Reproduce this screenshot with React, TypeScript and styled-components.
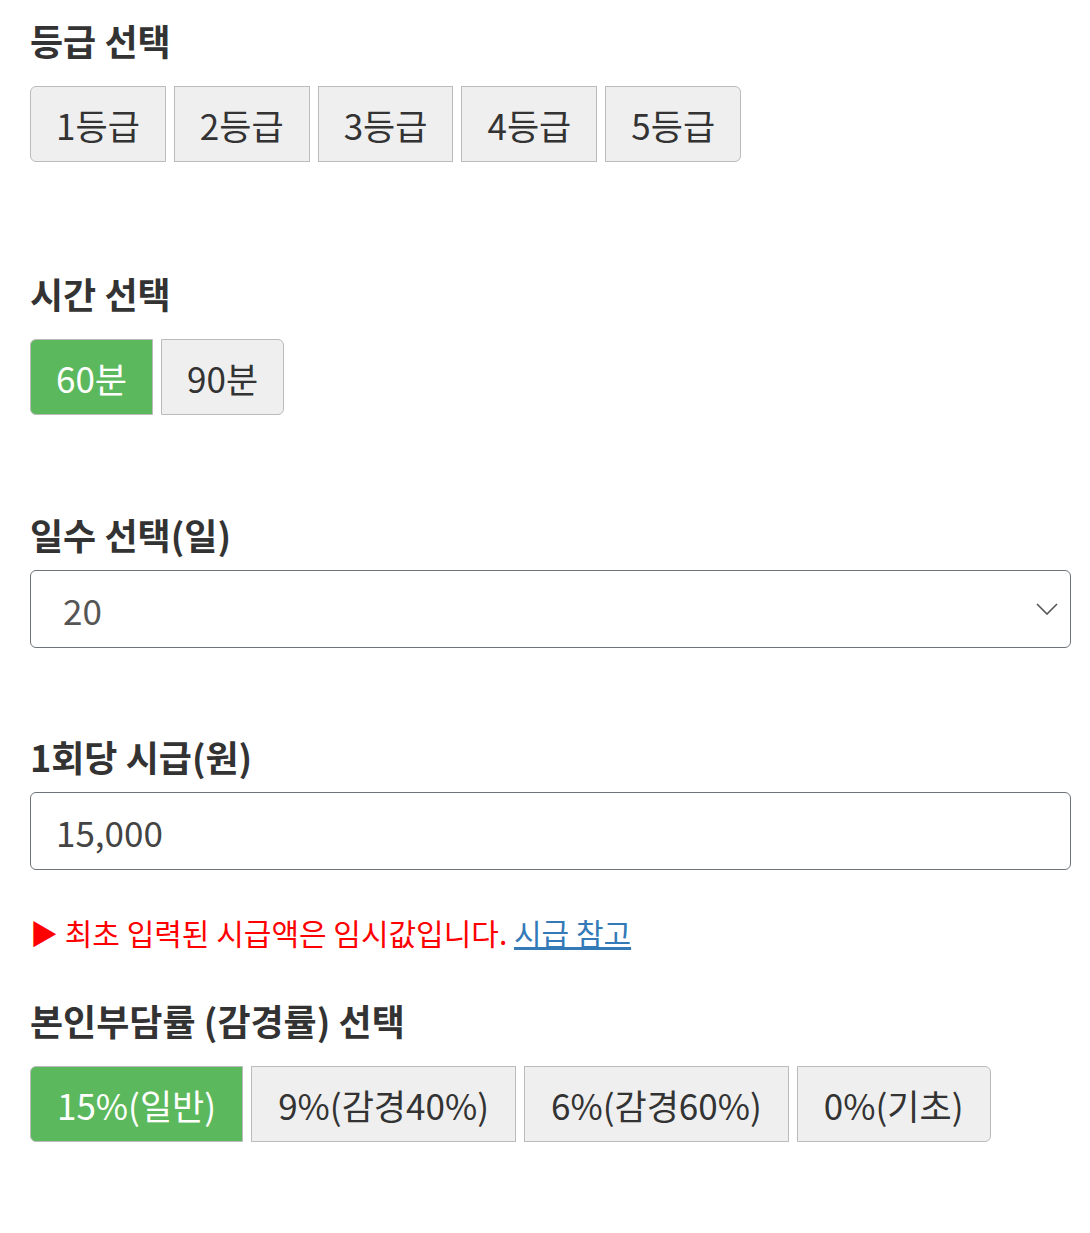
import React, { useState } from 'react'
import styled, { createGlobalStyle } from 'styled-components'

const GlobalStyle = createGlobalStyle`
    html, body {
        margin: 0;
        padding: 0;
        background: #fff;
    }

    body {
        font-family: "Noto Sans CJK KR", "Noto Sans", sans-serif;
        color: #333;
    }
`

const grades = ['1등급', '2등급', '3등급', '4등급', '5등급']
const times = ['60분', '90분']
const rates = ['15%(일반)', '9%(감경40%)', '6%(감경60%)', '0%(기초)']

type ChoiceProps = {
    options: string[]
    selected?: string
    pad?: number
    onSelect: (value: string) => void
}

const ChoiceGroup: React.FC<ChoiceProps> = ({ options, selected, pad, onSelect }) => (
    <Buttons>
        {options.map(option => (
            <Choice key={option} $active={option === selected} $pad={pad} onClick={() => onSelect(option)}>
                {option}
            </Choice>
        ))}
    </Buttons>
)

const App: React.FC = () => {
    const [grade, setGrade] = useState<string | undefined>()
    const [time, setTime] = useState('60분')
    const [days, setDays] = useState('20')
    const [wage, setWage] = useState('15,000')
    const [rate, setRate] = useState('15%(일반)')

    return (
        <>
            <GlobalStyle />
            <Page>
                <Section>
                    <Heading>등급 선택</Heading>
                    <ChoiceGroup options={grades} selected={grade} onSelect={setGrade} />
                </Section>

                <Section $top={109}>
                    <Heading>시간 선택</Heading>
                    <ChoiceGroup options={times} selected={time} onSelect={setTime} />
                </Section>

                <Section $top={97} $gap={10}>
                    <Heading>일수 선택(일)</Heading>
                    <SelectWrap>
                        <Select value={days} onChange={e => setDays(e.target.value)}>
                            {Array.from({ length: 31 }, (_, i) => i + 1).map(n => (
                                <option key={n} value={String(n)}>{n}</option>
                            ))}
                        </Select>
                        <Chevron width="22" height="12" viewBox="0 0 22 12">
                            <path d="M1 1 L11 11 L21 1" fill="none" stroke="#555" strokeWidth="1.6" />
                        </Chevron>
                    </SelectWrap>
                </Section>

                <Section $top={86} $gap={10}>
                    <Heading>1회당 시급(원)</Heading>
                    <Input value={wage} onChange={e => setWage(e.target.value)} />
                    <Notice>
                        <Arrow>▶</Arrow> 최초 입력된 시급액은 임시값입니다. <a href="#">시급 참고</a>
                    </Notice>
                </Section>

                <Section $top={45}>
                    <Heading>본인부담률 (감경률) 선택</Heading>
                    <ChoiceGroup options={rates} selected={rate} pad={26} onSelect={setRate} />
                </Section>
            </Page>
        </>
    )
}

const Page = styled.div`
    padding: 18px 19px 90px 30px;
    width: 1041px;
`

const Section = styled.section<{ $top?: number; $gap?: number }>`
    display: flex;
    flex-direction: column;
    gap: ${p => p.$gap ?? 20}px;
    margin-top: ${p => p.$top ?? 0}px;
`

const Heading = styled.h3`
    margin: 0;
    padding-bottom: 4px;
    font-size: 36px;
    line-height: 44px;
    font-weight: 700;
    color: #333;
`

const Buttons = styled.div`
    display: flex;
    gap: 8px;
`

const Choice = styled.button<{ $active: boolean; $pad?: number }>`
    height: 76px;
    padding: 0 ${p => p.$pad ?? 25}px;
    border: 1px solid #bbb;
    border-radius: 0;
    background-color: ${p => (p.$active ? '#5cb85c' : '#efefef')};
    color: ${p => (p.$active ? '#fff' : '#333')};
    font-family: inherit;
    font-size: 35px;
    cursor: pointer;

    &:first-child {
        border-top-left-radius: 6px;
        border-bottom-left-radius: 6px;
    }

    &:last-child {
        border-top-right-radius: 6px;
        border-bottom-right-radius: 6px;
    }
`

const SelectWrap = styled.div`
    position: relative;
`

const Select = styled.select`
    appearance: none;
    width: 100%;
    height: 78px;
    padding: 0 32px;
    border: 1px solid #6f747a;
    border-radius: 6px;
    background: #fff;
    color: #555;
    font-family: inherit;
    font-size: 35px;
`

const Chevron = styled.svg`
    position: absolute;
    right: 13px;
    top: 33px;
    pointer-events: none;
`

const Input = styled.input`
    box-sizing: border-box;
    width: 100%;
    height: 78px;
    padding: 0 25px;
    border: 1px solid #6f747a;
    border-radius: 6px;
    color: #444;
    font-family: inherit;
    font-size: 35px;
`

const Notice = styled.p`
    margin: 32px 0 0;
    font-size: 30px;
    line-height: 40px;
    color: #f00;

    & a {
        color: #337ab7;
        text-decoration: underline;
    }
`

const Arrow = styled.span`
    font-size: 28px;
`

export default App
